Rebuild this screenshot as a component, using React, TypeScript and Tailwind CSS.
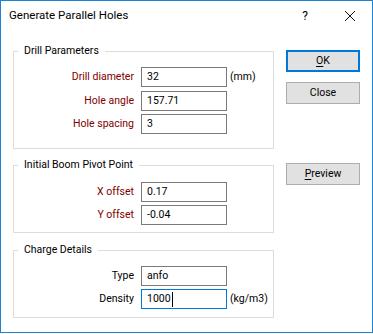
const font = "font-['Roboto','Liberation_Sans',sans-serif]";

type Field = { label: string; value: string; unit?: string; required?: boolean; focused?: boolean };

const drill: Field[] = [
  { label: 'Drill diameter', value: '32', unit: '(mm)', required: true },
  { label: 'Hole angle', value: '157.71', required: true },
  { label: 'Hole spacing', value: '3', required: true },
];

const pivot: Field[] = [
  { label: 'X offset', value: '0.17', required: true },
  { label: 'Y offset', value: '-0.04', required: true },
];

const charge: Field[] = [
  { label: 'Type', value: 'anfo' },
  { label: 'Density', value: '1000', unit: '(kg/m3)', focused: true },
];

function Row({ field }: { field: Field }) {
  return (
    <div className="flex items-center h-[20px]">
      <div className={`w-[120px] text-right ${field.required ? 'text-[#800000]' : 'text-black'}`}>
        {field.label}
      </div>
      <div
        className={`ml-[7px] w-[86px] h-[20px] flex items-center pl-[5px] bg-white border ${
          field.focused ? 'border-[#0078d7]' : 'border-[#7a7a7a]'
        }`}
      >
        <span>{field.value}</span>
        {field.focused && <span className="ml-px w-px h-[15px] bg-black" />}
      </div>
      {field.unit && <div className="ml-[3px]">{field.unit}</div>}
    </div>
  );
}

function Group({
  title,
  fields,
  className,
  rowsClass,
}: {
  title: string;
  fields: Field[];
  className: string;
  rowsClass: string;
}) {
  return (
    <fieldset className={`border border-[#dcdcdc] w-[261px] ${className}`}>
      <legend className="ml-[4px] px-[6px] leading-[16px]">{title}</legend>
      <div className={`flex flex-col ${rowsClass}`}>
        {fields.map((f) => (
          <Row key={f.label} field={f} />
        ))}
      </div>
    </fieldset>
  );
}

function Button({ children, primary, className }: { children: React.ReactNode; primary?: boolean; className: string }) {
  return (
    <button
      className={`w-[74px] h-[22px] bg-[#e1e1e1] flex items-center justify-center ${
        primary ? 'border-2 border-[#0078d7]' : 'border border-[#adadad]'
      } ${className}`}
    >
      {children}
    </button>
  );
}

export default function App() {
  return (
    <div className={`w-[373px] h-[333px] border border-[#1883d7] bg-white text-black text-[10.5px] ${font}`}>
      {/* Title bar */}
      <div className="h-[30px] flex items-center pl-[8px]">
        <span className="text-[11.5px]">Generate Parallel Holes</span>
        <span className="ml-auto text-[12px] mr-[36px]">?</span>
        <svg width="12" height="12" viewBox="0 0 12 12" className="mr-[16px]">
          <path d="M1 1 L11 11 M11 1 L1 11" stroke="#111" strokeWidth="1" />
        </svg>
      </div>

      <div className="flex">
        <div className="ml-[12px] flex flex-col">
          <Group
            title="Drill Parameters"
            fields={drill}
            className="mt-[12px] h-[106px]"
            rowsClass="mt-[8px] gap-y-[3.5px]"
          />
          <Group
            title="Initial Boom Pivot Point"
            fields={pivot}
            className="mt-[8px] h-[76px]"
            rowsClass="mt-[9px] gap-y-[3px]"
          />
          <Group
            title="Charge Details"
            fields={charge}
            className="mt-[9px] h-[76px]"
            rowsClass="mt-[8px] gap-y-[3px]"
          />
        </div>

        <div className="ml-[12px] flex flex-col">
          <Button primary className="mt-[19px]">
            <span className="underline underline-offset-2">O</span>K
          </Button>
          <Button className="mt-[10px]">Close</Button>
          <Button className="mt-[59px]">
            <span className="underline underline-offset-2">P</span>review
          </Button>
        </div>
      </div>
    </div>
  );
}
